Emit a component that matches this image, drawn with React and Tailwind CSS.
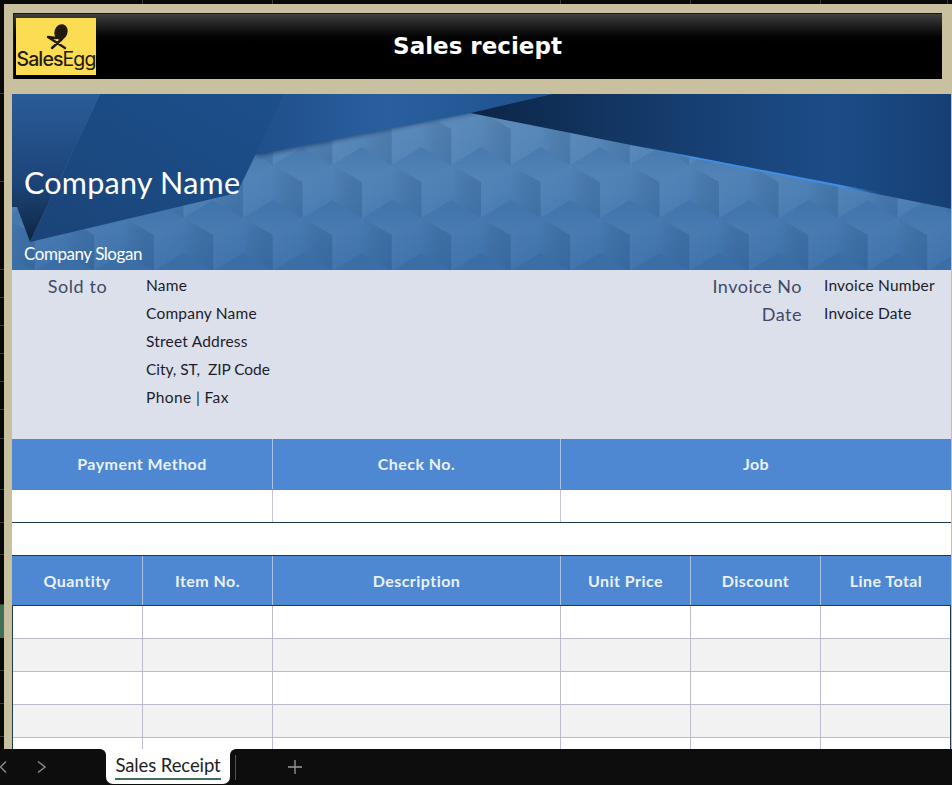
import React from "react";

const lato = "font-['Lato','Carlito','Liberation_Sans',sans-serif]";

function Hero() {
  return (
    <svg className="absolute inset-0 h-full w-full" viewBox="12 94 939 176" preserveAspectRatio="none">
      <defs>
        <linearGradient id="faceL" x1="0" x2="1" y1="0" y2="0">
          <stop offset="0" stopColor="#000000" stopOpacity="0" />
          <stop offset="1" stopColor="#123c70" stopOpacity="0.16" />
        </linearGradient>
        <linearGradient id="faceR" x1="0" x2="1" y1="0" y2="0">
          <stop offset="0" stopColor="#ffffff" stopOpacity="0.03" />
          <stop offset="1" stopColor="#ffffff" stopOpacity="0" />
        </linearGradient>
        <linearGradient id="topFace" x1="0" x2="0" y1="0" y2="1">
          <stop offset="0" stopColor="#1f5590" stopOpacity="0.24" />
          <stop offset="0.5" stopColor="#1f5590" stopOpacity="0.08" />
          <stop offset="1" stopColor="#8fb4d6" stopOpacity="0.08" />
        </linearGradient>
        <pattern id="cubes" patternUnits="userSpaceOnUse" x="213.25" y="147" width="59.5" height="106">
          <polygon points="0,18 29.75,35 29.75,71 0,53" fill="url(#faceL)" />
          <polygon points="29.75,35 59.5,18 59.5,53 29.75,71" fill="url(#faceR)" />
          <polygon points="29.75,71 59.5,88 59.5,124 29.75,106" fill="url(#faceL)" />
          <polygon points="0,88 29.75,71 29.75,106 0,124" fill="url(#faceR)" />
          <polygon points="29.75,-35 59.5,-18 59.5,18 29.75,0" fill="url(#faceL)" />
          <polygon points="0,-18 29.75,-35 29.75,0 0,18" fill="url(#faceR)" />
          <polygon points="29.75,0 59.5,18 29.75,35 0,18" fill="url(#topFace)" />
          <polygon points="0,53 29.75,71 0,88" fill="url(#topFace)" />
          <polygon points="59.5,53 59.5,88 29.75,71" fill="url(#topFace)" />
        </pattern>
        <linearGradient id="base" x1="0" x2="0" y1="0" y2="1">
          <stop offset="0" stopColor="#5d8cba" />
          <stop offset="0.55" stopColor="#4c7fb4" />
          <stop offset="1" stopColor="#3d71aa" />
        </linearGradient>
        <linearGradient id="band" x1="0" x2="1" y1="1" y2="0">
          <stop offset="0" stopColor="#1a4478" />
          <stop offset="0.5" stopColor="#1b4a82" />
          <stop offset="1" stopColor="#1d4f8c" />
        </linearGradient>
        <linearGradient id="leftp" x1="0" x2="0" y1="0" y2="1">
          <stop offset="0" stopColor="#2a5c98" />
          <stop offset="0.6" stopColor="#1c4478" />
          <stop offset="1" stopColor="#0f2643" />
        </linearGradient>
        <linearGradient id="mid" x1="0" x2="1" y1="0" y2="0">
          <stop offset="0" stopColor="#1f4f8b" />
          <stop offset="0.45" stopColor="#2a5f9f" />
          <stop offset="1" stopColor="#1e508c" />
        </linearGradient>
        <linearGradient id="dark" x1="0" x2="1" y1="0" y2="0">
          <stop offset="0" stopColor="#0c2547" />
          <stop offset="0.5" stopColor="#174175" />
          <stop offset="0.75" stopColor="#1c4c87" />
          <stop offset="1" stopColor="#163f74" />
        </linearGradient>
        <linearGradient id="ray" x1="631" y1="145" x2="880" y2="192" gradientUnits="userSpaceOnUse">
          <stop offset="0" stopColor="#3d8ae0" stopOpacity="0" />
          <stop offset="0.25" stopColor="#3f8de6" />
          <stop offset="0.85" stopColor="#3f8de6" />
          <stop offset="1" stopColor="#3d8ae0" stopOpacity="0" />
        </linearGradient>
        <filter id="soft" x="-10%" y="-30%" width="120%" height="160%">
          <feGaussianBlur stdDeviation="2" />
        </filter>
      </defs>
      <rect x="12" y="94" width="939" height="176" fill="url(#base)" />
      <rect x="12" y="94" width="939" height="176" fill="url(#cubes)" />
      <polygon points="285,94 552,94 470.5,113 255,157" fill="#0d2a4f" fillOpacity="0.6" filter="url(#soft)" />
      <polygon points="285,94 552,94 470.5,113 255,155" fill="url(#mid)" />
      <polygon points="552,94 952,94 952,209 470.5,113" fill="url(#dark)" />
      <polygon points="631,144.5 880,192.5 880,195 631,146" fill="url(#ray)" />
      <polygon points="12,94 100,94 30,242 17,207 12,207" fill="url(#leftp)" />
      <polygon points="100,94 285,94 237,193 30,242" fill="url(#band)" />
    </svg>
  );
}

function Logo() {
  return (
    <div className="mt-[-1px] flex h-[57px] w-[80px] flex-col items-center bg-[#fbdc52]">
      <svg width="32" height="32" viewBox="0 0 32 32" className="mt-[1px] shrink-0">
        <ellipse cx="21" cy="13" rx="6.5" ry="8" transform="rotate(20 21 13)" fill="#221a10" />
        <path d="M8 18 L25 29 M12 29 L22 20 M8 18 L16 19" stroke="#221a10" strokeWidth="2.4" fill="none" strokeLinecap="round" />
      </svg>
      <div className="mt-[-3px] whitespace-nowrap font-['Inter',sans-serif] text-[19.5px] font-medium leading-[22px] tracking-[-0.9px] text-[#241b0f]">
        Sales<span className="font-normal">Egg</span>
      </div>
    </div>
  );
}

const topCols = [143, 130, 288, 130, 130, 127];

export default function App() {
  const rows = ["bg-white", "bg-[#f2f2f2]", "bg-white", "bg-[#f2f2f2]", "bg-white"];
  const cols = [
    ["Quantity", "border-r"],
    ["Item No.", "border-r"],
    ["Description", "border-r"],
    ["Unit Price", "border-r"],
    ["Discount", "border-r"],
    ["Line Total", ""],
  ];
  return (
    <div className={`flex h-[785px] w-[952px] flex-col overflow-hidden bg-[#0a0a0a] ${lato}`}>
      <div className="flex h-[4px] shrink-0">
        {topCols.map((w, i) => (
          <div key={i} style={{ width: w }} className="h-full border-r border-[#3a3a3a]" />
        ))}
      </div>
      <div className="flex min-h-0 flex-1">
        <div className="flex w-[4px] shrink-0 flex-col">
          {[90, 88, 88, 28, 28, 28, 28, 28, 29, 51, 33, 32, 50].map((h, i) => (
            <div key={i} style={{ height: h }} className="shrink-0 border-b border-[#3a3a3a]" />
          ))}
          <div className="h-[33px] shrink-0 bg-[#3f6f55]" />
          <div className="h-[33px] shrink-0 border-b border-[#3a3a3a]" />
          <div className="h-[33px] shrink-0 border-b border-[#3a3a3a]" />
          <div className="h-[33px] shrink-0 border-b border-[#3a3a3a]" />
        </div>
        <div className="min-w-0 flex-1 overflow-hidden bg-[#c8c09e] pl-[8px] pr-[1px]">
          <div className="pb-[15px] pl-[1px] pr-[9px] pt-[9px]">
            <div className="grid h-[66px] grid-cols-[84px_1fr_87px] items-center border-l border-t border-[#1a1a1a] bg-gradient-to-b from-[#404040] via-[#000000] via-50% to-[#000000] pl-[2px]">
              <Logo />
              <div className="text-center font-['DejaVu_Sans',sans-serif] text-[23px] font-bold leading-none text-white">
                Sales reciept
              </div>
              <div />
            </div>
          </div>

          <div className="relative h-[176px] overflow-hidden bg-[#3a6fa8] text-white">
            <Hero />
            <div className="relative pl-[12px] pt-[70px] text-[30.5px] leading-[36px] tracking-[0.25px]">Company Name</div>
            <div className="relative pl-[12px] pt-[44px] text-[17px] leading-[20px] tracking-[-0.45px]">Company Slogan</div>
          </div>

          <div className="grid h-[169px] grid-cols-[131px_130px_288px_130px_130px_130px] content-start bg-[#dce0ea] pt-[1px] text-[15.5px] leading-[28px] tracking-[0.2px] text-[#1c1c2c]">
            <div className="mt-[1px] text-center text-[18px] tracking-[0.6px] text-[#3f4a6a]">Sold to</div>
            <div className="col-span-2 pl-[3px]">
              <div>Name</div>
              <div>Company Name</div>
              <div>Street Address</div>
              <div className="tracking-[-0.05px]">City, ST,&nbsp; ZIP Code</div>
              <div className="tracking-[0.4px]">Phone | Fax</div>
            </div>
            <div />
            <div className="mt-[1px] pr-[19px] text-right text-[18px] tracking-[0.5px] text-[#3f4a6a]">
              <div className="whitespace-nowrap">Invoice No</div>
              <div>Date</div>
            </div>
            <div className="whitespace-nowrap pl-[3px]">
              <div>Invoice Number</div>
              <div>Invoice Date</div>
            </div>
          </div>

          <div className="grid h-[51px] grid-cols-[261px_288px_390px] items-center bg-[#4f88d2] pb-[1px] text-center text-[16px] font-bold tracking-[0.45px] text-[#e9f1fb]">
            <div className="flex h-full items-center justify-center border-r border-[#a9c3e6]">Payment Method</div>
            <div className="flex h-full items-center justify-center border-r border-[#a9c3e6]">Check No.</div>
            <div>Job</div>
          </div>
          <div className="grid h-[33px] grid-cols-[261px_288px_390px] border-b border-[#1f3a48] bg-white">
            <div className="border-r border-[#c5c5da]" />
            <div className="border-r border-[#c5c5da]" />
            <div />
          </div>
          <div className="h-[32px] bg-white" />

          <div className="grid h-[51px] grid-cols-[131px_130px_288px_130px_130px_130px] border-b border-t border-[#1f3a48] bg-[#4f88d2] text-center text-[16px] font-bold tracking-[0.45px] text-[#e9f1fb]">
            {cols.map(([t, b]) => (
              <div key={t} className={`flex h-full items-center justify-center border-[#a9c3e6] ${b}`}>
                {t}
              </div>
            ))}
          </div>
          <div className="border-l border-r border-[#1f3a48]">
            {rows.map((bg, r) => (
              <div key={r} className={`grid h-[33px] grid-cols-[130px_130px_288px_130px_130px_129px] border-b border-[#bcbccf] ${bg}`}>
                {cols.map(([t, b]) => (
                  <div key={t} className={`border-[#bcbccf] ${b}`} />
                ))}
              </div>
            ))}
          </div>
        </div>
      </div>

      <div className="flex h-[36px] shrink-0 bg-white text-[#9a9a9a]">
        <div className="flex w-[106px] items-center rounded-tr-[6px] bg-[#0d0d0d]">
          <svg width="52" height="16" viewBox="0 0 52 16" fill="none" stroke="#8a8a8a" strokeWidth="1.5">
            <path d="M6 2.5 L0.5 8 L6 13.5" />
            <path d="M38 2.5 L45 8 L38 13.5" />
          </svg>
        </div>
        <div className="w-[124px] bg-[#0d0d0d]">
          <div className="flex h-[35px] flex-col items-center rounded-b-[7px] bg-white">
            <div className="mt-[3px] border-b-[2px] border-[#3f6f55] text-[18.5px] leading-[26px] tracking-[-0.1px] text-[#222]">
              Sales Receipt
            </div>
          </div>
        </div>
        <div className="flex flex-1 items-center rounded-tl-[6px] bg-[#0d0d0d] pl-[5px]">
          <div className="h-[25px] w-px bg-[#555]" />
          <svg width="16" height="16" viewBox="0 0 16 16" className="ml-[51px]" fill="none" stroke="#9a9a9a" strokeWidth="1.3">
            <path d="M8 1 V15 M1 8 H15" />
          </svg>
        </div>
      </div>
    </div>
  );
}
